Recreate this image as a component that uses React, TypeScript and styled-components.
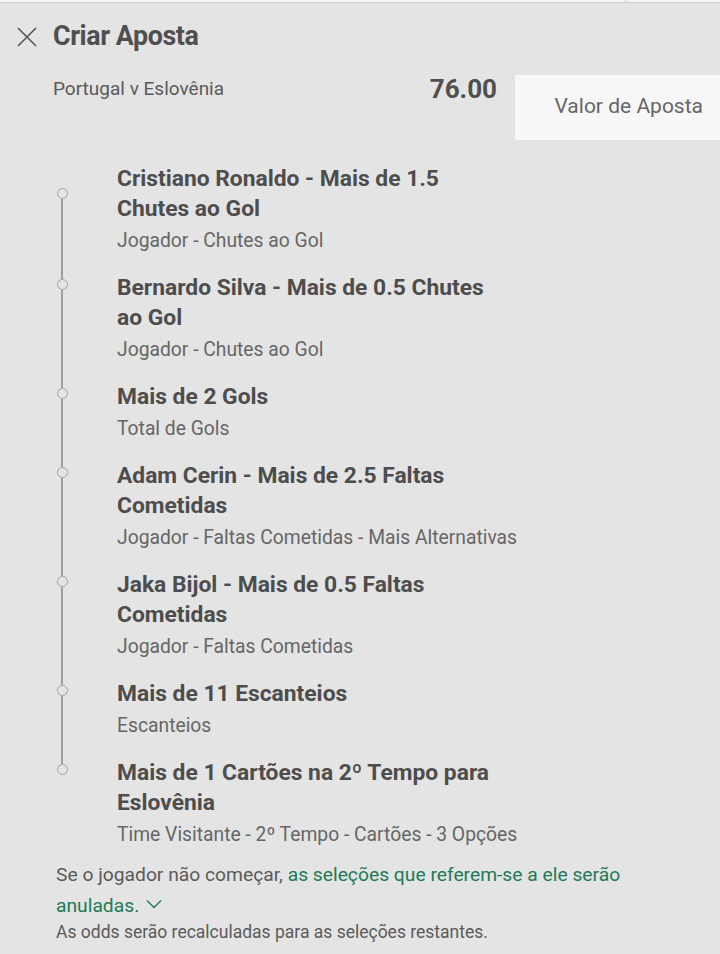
import React from "react";
import styled, { createGlobalStyle } from "styled-components";

const GlobalStyle = createGlobalStyle`
  body {
    margin: 0;
    background: #e4e4e4;
    font-family: Roboto, "Noto Sans", sans-serif;
  }
`;

const selections = [
  {
    title: "Cristiano Ronaldo - Mais de 1.5 Chutes ao Gol",
    market: "Jogador - Chutes ao Gol",
  },
  {
    title: "Bernardo Silva - Mais de 0.5 Chutes ao Gol",
    market: "Jogador - Chutes ao Gol",
  },
  { title: "Mais de 2 Gols", market: "Total de Gols" },
  {
    title: "Adam Cerin - Mais de 2.5 Faltas Cometidas",
    market: "Jogador - Faltas Cometidas - Mais Alternativas",
  },
  {
    title: "Jaka Bijol - Mais de 0.5 Faltas Cometidas",
    market: "Jogador - Faltas Cometidas",
  },
  { title: "Mais de 11 Escanteios", market: "Escanteios" },
  {
    title: "Mais de 1 Cartões na 2º Tempo para Eslovênia",
    market: "Time Visitante - 2º Tempo - Cartões - 3 Opções",
  },
];

const CloseIcon = () => (
  <svg width="22" height="22" viewBox="0 0 22 22">
    <path d="M2 2 L20 20 M20 2 L2 20" stroke="#555" strokeWidth="1.6" fill="none" />
  </svg>
);

const Chevron = () => (
  <svg width="16" height="10" viewBox="0 0 16 10">
    <path d="M1 1.5 L8 8.5 L15 1.5" stroke="#217a56" strokeWidth="1.4" fill="none" />
  </svg>
);

const App = () => {
  return (
    <Page>
      <GlobalStyle />
      <TopStrip>
        <TopDivider />
      </TopStrip>
      <Header>
        <CloseButton>
          <CloseIcon />
        </CloseButton>
        <Title>Criar Aposta</Title>
      </Header>
      <MatchRow>
        <MatchName>Portugal v Eslovênia</MatchName>
        <Odds>76.00</Odds>
        <StakeBox>Valor de Aposta</StakeBox>
      </MatchRow>
      <List>
        {selections.map((s, i) => (
          <Item key={i}>
            <Rail>
              <RailTop $first={i === 0} $hidden={i === 0} />
              <Dot />
              <RailBottom $hidden={i === selections.length - 1} />
            </Rail>
            <ItemBody>
              <ItemTitle>{s.title}</ItemTitle>
              <ItemMarket>{s.market}</ItemMarket>
            </ItemBody>
          </Item>
        ))}
      </List>
      <Footer>
        <Notice>
          Se o jogador não começar,{" "}
          <NoticeLink>
            as seleções que referem-se a ele serão anuladas.
          </NoticeLink>{" "}
          <Chevron />
        </Notice>
        <SmallNote>As odds serão recalculadas para as seleções restantes.</SmallNote>
      </Footer>
    </Page>
  );
};

const Page = styled.div`
  width: 720px;
  min-height: 954px;
  background: #e4e4e4;
`;

const TopStrip = styled.div`
  height: 2px;
  background: #f4f4f4;
  border-bottom: 1px solid #cdcdcd;
  display: flex;
  justify-content: flex-end;
  padding-right: 94px;
`;

const TopDivider = styled.div`
  width: 1px;
  height: 3px;
  background: #cdcdcd;
`;

const Header = styled.div`
  display: flex;
  align-items: center;
  height: 66px;
  padding-left: 16px;
`;

const CloseButton = styled.div`
  display: flex;
  width: 22px;
  height: 22px;
  margin-top: 2px;
  margin-right: 15px;
`;

const Title = styled.h1`
  margin: 0;
  font-size: 26.8px;
  font-weight: 700;
  color: #4f4f4f;
  letter-spacing: -0.4px;
`;

const MatchRow = styled.div`
  display: flex;
  align-items: center;
  margin-top: 6px;
  padding-left: 53px;
`;

const MatchName = styled.div`
  flex: 1;
  font-size: 19px;
  color: #5a5a5a;
  margin-top: -38px;
`;

const Odds = styled.div`
  font-size: 26px;
  font-weight: 700;
  color: #4f4f4f;
  margin-right: 18px;
  margin-top: -37px;
`;

const StakeBox = styled.div`
  width: 205px;
  height: 65px;
  box-sizing: border-box;
  background: #f7f7f7;
  display: flex;
  align-items: center;
  justify-content: flex-end;
  padding: 0 17px 3px 0;
  font-size: 21px;
  color: #666;
`;

const List = styled.div`
  display: flex;
  flex-direction: column;
  gap: 20px;
  margin-top: 24px;
`;

const Item = styled.div`
  display: flex;
`;

const Rail = styled.div`
  width: 11px;
  margin-left: 56.5px;
  margin-right: 49.5px;
  display: flex;
  flex-direction: column;
  align-items: center;
`;

const RailTop = styled.div<{ $first?: boolean; $hidden?: boolean }>`
  width: 2px;
  height: ${(p) => (p.$first ? "23.5px" : "6px")};
  background: ${(p) => (p.$hidden ? "transparent" : "#9e9e9e")};
`;

const Dot = styled.div`
  width: 11px;
  height: 11px;
  box-sizing: border-box;
  border: 1.5px solid #a3a3a3;
  border-radius: 50%;
`;

const RailBottom = styled.div<{ $hidden?: boolean }>`
  flex: 1;
  width: 2px;
  margin-bottom: -20px;
  background: ${(p) => (p.$hidden ? "transparent" : "#9e9e9e")};
`;

const ItemBody = styled.div`
  flex: 1;
`;

const ItemTitle = styled.div`
  max-width: 378px;
  font-size: 22.8px;
  line-height: 30px;
  font-weight: 700;
  color: #4d4d4d;
`;

const ItemMarket = styled.div`
  margin-top: 5px;
  font-size: 19.3px;
  line-height: 24px;
  color: #666;
  white-space: nowrap;
`;

const Footer = styled.div`
  margin-top: 12px;
  padding-left: 56px;
  padding-right: 40px;
`;

const Notice = styled.div`
  font-size: 19.25px;
  line-height: 31px;
  color: #5a5a5a;

  svg {
    vertical-align: 3px;
    margin-left: 2px;
  }
`;

const NoticeLink = styled.span`
  color: #217a56;
`;

const SmallNote = styled.div`
  font-size: 17.5px;
  line-height: 22px;
  color: #5a5a5a;
`;

export default App;
